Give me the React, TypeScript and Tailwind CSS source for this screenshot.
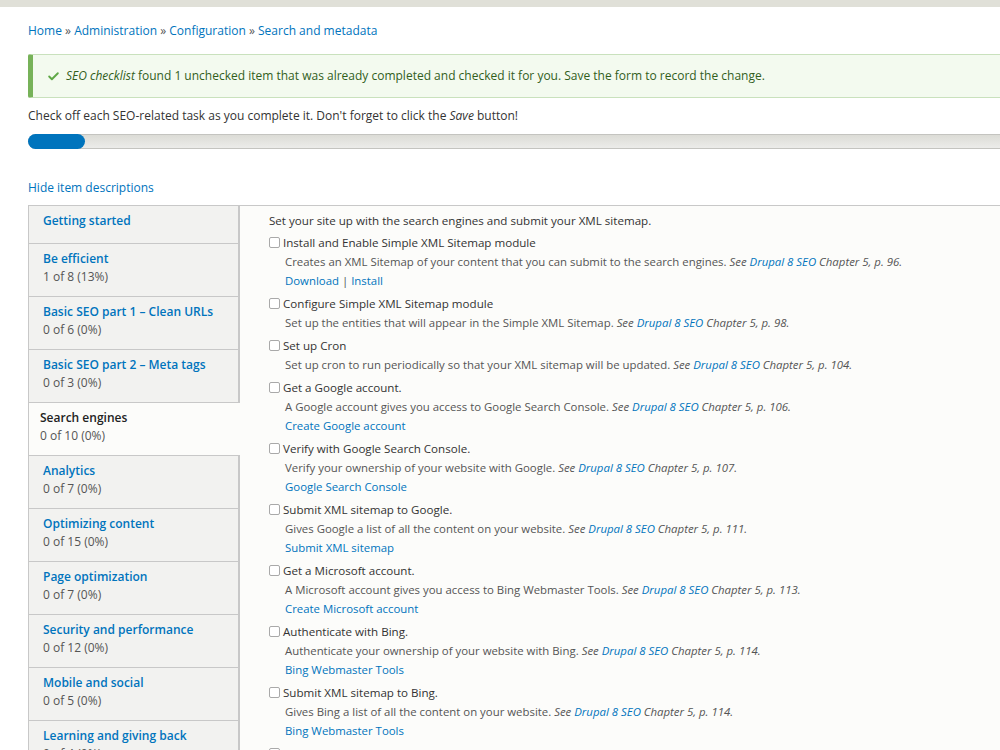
import React from 'react';
import { Check } from 'lucide-react';

interface Tab {
  title: string;
  summary?: string;
  active?: boolean;
}

interface Item {
  label: string;
  desc: string;
  page: string;
  links?: string[];
}

const tabs: Tab[] = [
  { title: 'Getting started' },
  { title: 'Be efficient', summary: '1 of 8 (13%)' },
  { title: 'Basic SEO part 1 – Clean URLs', summary: '0 of 6 (0%)' },
  { title: 'Basic SEO part 2 – Meta tags', summary: '0 of 3 (0%)' },
  { title: 'Search engines', summary: '0 of 10 (0%)', active: true },
  { title: 'Analytics', summary: '0 of 7 (0%)' },
  { title: 'Optimizing content', summary: '0 of 15 (0%)' },
  { title: 'Page optimization', summary: '0 of 7 (0%)' },
  { title: 'Security and performance', summary: '0 of 12 (0%)' },
  { title: 'Mobile and social', summary: '0 of 5 (0%)' },
  { title: 'Learning and giving back', summary: '0 of 4 (0%)' },
];

const items: Item[] = [
  {
    label: 'Install and Enable Simple XML Sitemap module',
    desc: 'Creates an XML Sitemap of your content that you can submit to the search engines.',
    page: '96',
    links: ['Download', 'Install'],
  },
  {
    label: 'Configure Simple XML Sitemap module',
    desc: 'Set up the entities that will appear in the Simple XML Sitemap.',
    page: '98',
  },
  {
    label: 'Set up Cron',
    desc: 'Set up cron to run periodically so that your XML sitemap will be updated.',
    page: '104',
  },
  {
    label: 'Get a Google account.',
    desc: 'A Google account gives you access to Google Search Console.',
    page: '106',
    links: ['Create Google account'],
  },
  {
    label: 'Verify with Google Search Console.',
    desc: 'Verify your ownership of your website with Google.',
    page: '107',
    links: ['Google Search Console'],
  },
  {
    label: 'Submit XML sitemap to Google.',
    desc: 'Gives Google a list of all the content on your website.',
    page: '111',
    links: ['Submit XML sitemap'],
  },
  {
    label: 'Get a Microsoft account.',
    desc: 'A Microsoft account gives you access to Bing Webmaster Tools.',
    page: '113',
    links: ['Create Microsoft account'],
  },
  {
    label: 'Authenticate with Bing.',
    desc: 'Authenticate your ownership of your website with Bing.',
    page: '114',
    links: ['Bing Webmaster Tools'],
  },
  {
    label: 'Submit XML sitemap to Bing.',
    desc: 'Gives Bing a list of all the content on your website.',
    page: '114',
    links: ['Bing Webmaster Tools'],
  },
  {
    label: 'Add XML Sitemap to your robots.txt file.',
    desc: 'Tell the search engines where to find your XML sitemap.',
    page: '115',
  },
];

function TabButton({ tab }: { tab: Tab }) {
  if (tab.active) {
    return (
      <div className="relative z-10 -mr-px bg-[#fcfcfa] border-b border-[#c8c8c8] pl-[11px] pt-[6px] pb-[10px] leading-[18px]">
        <div className="font-semibold text-[#222]">{tab.title}</div>
        <div className="text-[#555]">{tab.summary}</div>
      </div>
    );
  }
  return (
    <div
      className={`border-b border-r border-[#c8c8c8] pl-[14px] pt-[6px] leading-[18px] ${
        tab.summary ? 'pb-[10px]' : 'pb-[13px]'
      }`}
    >
      <a className="block font-semibold text-[#0074bd]">{tab.title}</a>
      {tab.summary && <div className="text-[#555]">{tab.summary}</div>}
    </div>
  );
}

function ChecklistItem({ item }: { item: Item }) {
  return (
    <div className="mb-[4px] leading-[19px]">
      <label className="flex items-center text-[11.6px]">
        <span className="mr-[3px] inline-block h-[11px] w-[11px] rounded-[2px] border border-[#a9a9a9] bg-white" />
        <span className="text-[#333]">{item.label}</span>
      </label>
      <div className="pl-[16px] text-[11.4px] text-[#555]">
        {item.desc} <em>See</em> <em className="text-[#0074bd]">Drupal 8 SEO</em>{' '}
        <em>Chapter 5, p. {item.page}.</em>
      </div>
      {item.links && (
        <div className="pl-[16px] text-[11.4px] text-[#0074bd]">
          {item.links.map((l, i) => (
            <span key={l}>
              {i > 0 && <span className="text-[#555]"> | </span>}
              <a>{l}</a>
            </span>
          ))}
        </div>
      )}
    </div>
  );
}

export default function App() {
  return (
    <div
      className="h-[750px] w-[1000px] overflow-hidden bg-white text-[12px] text-[#333]"
      style={{ fontFamily: '"Open Sans", "DejaVu Sans", sans-serif' }}
    >
      <div className="h-[7px] bg-[#e0e0d8]" />

      <div className="pl-[28px]">
        {/* breadcrumb */}
        <div className="mt-[15px] leading-[18px] text-[#0074bd]">
          <a>Home</a> <span className="text-[#555]">»</span> <a>Administration</a>{' '}
          <span className="text-[#555]">»</span> <a>Configuration</a>{' '}
          <span className="text-[#555]">»</span> <a>Search and metadata</a>
        </div>

        {/* status message */}
        <div className="mt-[14px] flex h-[44px] w-[1000px] items-center rounded-l-[2px] border border-l-[5px] border-[#c9e1bd] border-l-[#77b259] bg-[#f3faef] pl-[14px] text-[#325e1c]">
          <Check className="mr-[6px] h-[13px] w-[13px] text-[#5fa846]" strokeWidth={3.5} />
          <span>
            <em>SEO checklist</em> found 1 unchecked item that was already completed and checked it for you. Save
            the form to record the change.
          </span>
        </div>

        <p className="mt-[9px] leading-[18px] text-[#333]">
          Check off each SEO-related task as you complete it. Don't forget to click the <em>Save</em> button!
        </p>

        {/* progress */}
        <div className="mt-[9px] h-[15px] w-[1000px] rounded-l-full border border-[#c4c4c0] bg-gradient-to-b from-[#dcdcd6] to-[#ececea]">
          <div className="-m-px h-[15px] w-[57px] rounded-full bg-[#0074bd]" />
        </div>

        <div className="mt-[30px] leading-[18px]">
          <a className="text-[#0074bd]">Hide item descriptions</a>
        </div>

        {/* vertical tabs */}
        <div className="mt-[8px] flex w-[1000px] border-t border-l border-[#c8c8c8]">
          <div className="w-[210px] shrink-0 bg-[#f2f2f0]">
            {tabs.map((t) => (
              <TabButton key={t.title} tab={t} />
            ))}
          </div>
          <div className="flex-1 border-l border-[#c8c8c8] bg-[#fcfcfa] pl-[29px] pt-[5px]">
            <p className="mb-[3px] text-[11.6px] leading-[19px] text-[#333]">
              Set your site up with the search engines and submit your XML sitemap.
            </p>
            {items.map((it) => (
              <ChecklistItem key={it.label} item={it} />
            ))}
          </div>
        </div>
      </div>
    </div>
  );
}
